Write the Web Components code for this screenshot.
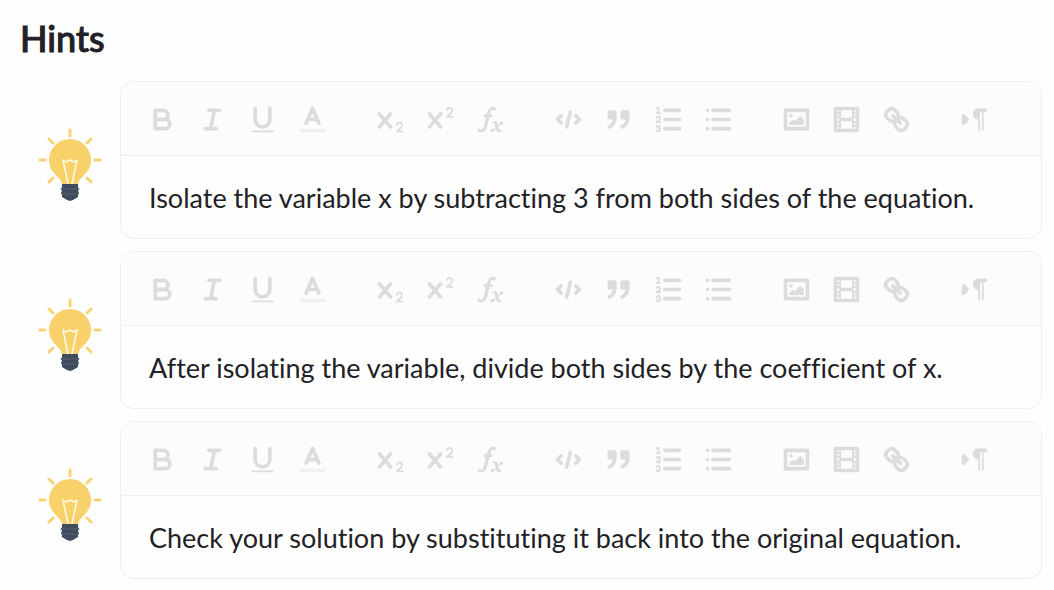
<!DOCTYPE html>
<html lang="en">
<head>
<meta charset="utf-8">
<meta name="viewport" content="width=device-width, initial-scale=1">
<title>Hints</title>
<style>
  body { margin: 0; background: #fefefe; color: #222125; font-family: Lato, "Open Sans", sans-serif; font-variant-ligatures: none; }
</style>
</head>
<body>
<hints-panel heading="Hints">
  <hint-item>Isolate the variable x by subtracting 3 from both sides of the equation.</hint-item>
  <hint-item>After isolating the variable, divide both sides by the coefficient of x.</hint-item>
  <hint-item>Check your solution by substituting it back into the original equation.</hint-item>
</hints-panel>

<template id="panel-template">
  <style>
    :host { display: block; padding: 14px 12px 12px 20px; }
    h1 { margin: 0 0 19px; font-size: 36px; line-height: 48px; font-weight: 500; -webkit-text-stroke: 1px currentColor; }
    .list { display: flex; flex-direction: column; gap: 12px; }
  </style>
  <section aria-labelledby="title">
    <h1 id="title"></h1>
    <div class="list"><slot></slot></div>
  </section>
</template>

<template id="item-template">
  <style>
    :host { display: grid; grid-template-columns: 100px minmax(0, 1fr); align-items: center; }
    hint-bulb { justify-self: center; }
  </style>
  <hint-bulb></hint-bulb>
  <rich-editor><slot></slot></rich-editor>
</template>

<template id="bulb-template">
  <style>
    :host { display: block; }
    svg { display: block; width: 64px; height: 84px; }
  </style>
  <svg viewBox="0 0 64 84" fill="none" stroke-linecap="round" aria-hidden="true">
    <path d="M32 12v6M11 21l4 4M53 21l-4 4M2 42h5M57 42h5M11 64l4-4M53 64l-4-4" stroke="#f7d373" stroke-width="3"/>
    <path d="M32 21a21 21 0 0 0-21 21c0 11 8 15 12 21 1 2 1 3 1 5h16c0-2 0-3 1-5 4-6 12-10 12-21a21 21 0 0 0-21-21z" fill="#f8d16b"/>
    <path d="M30 66L25 42l3 2 4-2 4 2 3-2-5 24" stroke="#fffbe9" stroke-width="1.5" stroke-linejoin="round"/>
    <path d="M24 66h16v3l1 2-1 2 1 2-1 2v2l-5 3-3 1-3-1-5-3v-2l-1-2 1-2-1-2 1-2z" fill="#3f4c5d"/>
    <path d="M23 71h18M24 76h16" stroke="#566273" stroke-width="1"/>
  </svg>
</template>

<template id="editor-template">
  <style>
    :host { display: block; border: 1px solid #efeef1; border-radius: 14px; overflow: hidden; background: #fefefe; }
    [role=toolbar] { display: flex; flex-wrap: wrap; column-gap: 28px; min-height: 71px; align-content: center; padding: 2px 16px 0; background: #fdfbfe; border-bottom: 1px solid #efeef1; box-sizing: content-box; }
    .group { display: flex; }
    .text { padding: 24px 28px 22px; font-size: 27px; line-height: 36px; outline: none; }
  </style>
  <div role="toolbar" aria-label="Formatting">
    <div class="group"><tool-button name="bold" label="Bold"></tool-button><tool-button name="italic" label="Italic"></tool-button><tool-button name="underline" label="Underline"></tool-button><tool-button name="color" label="Text color"></tool-button></div>
    <div class="group"><tool-button name="sub" label="Subscript"></tool-button><tool-button name="super" label="Superscript"></tool-button><tool-button name="formula" label="Formula"></tool-button></div>
    <div class="group"><tool-button name="code" label="Code"></tool-button><tool-button name="quote" label="Quote"></tool-button><tool-button name="ordered" label="Numbered list"></tool-button><tool-button name="bullet" label="Bulleted list"></tool-button></div>
    <div class="group"><tool-button name="image" label="Image"></tool-button><tool-button name="video" label="Video"></tool-button><tool-button name="link" label="Link"></tool-button></div>
    <div class="group"><tool-button name="direction" label="Text direction"></tool-button></div>
  </div>
  <div class="text" role="textbox" contenteditable="true" spellcheck="false" aria-label="Hint text"><slot></slot></div>
</template>

<template id="button-template">
  <style>
    :host { display: block; }
    button { display: grid; place-items: center; width: 50px; height: 41px; margin: 0; padding: 0; border: 0; background: none; color: #dcdbde; cursor: pointer; }
    svg { width: 33px; height: 33px; display: block; }
    .s { fill: none; stroke: currentColor; stroke-width: 2; stroke-linecap: round; stroke-linejoin: round; }
    .f { fill: currentColor; }
    .sf { fill: currentColor; stroke: currentColor; stroke-width: 2; stroke-linecap: round; stroke-linejoin: round; }
    .thin { stroke-width: 1; }
    .pale { opacity: .4; }
  </style>
  <button type="button"></button>
</template>

<script>
const X = '<path class="f" d="M9.65,5.241a1,1,0,0,0-1.409.108L6,7.964,3.759,5.349A1,1,0,0,0,2.192,6.592Q2.215,6.621,2.241,6.649L4.684,9.5,2.241,12.35A1,1,0,0,0,3.71,13.707q.026-.028.049-.057L6,11.036,8.241,13.65a1,1,0,1,0,1.567-1.243Q9.785,12.378,9.759,12.35L7.316,9.5,9.759,6.651A1,1,0,0,0,9.65,5.241Z"/>';
const ICONS = {
  bold: '<path class="s" d="M5,4H9.5A2.5,2.5,0,0,1,9.5,9H5Z"/><path class="s" d="M5,9h5.5A2.5,2.5,0,0,1,10.5,14H5Z"/>',
  italic: '<path class="s" d="M7,4H13M5,14H11M8,14L10,4"/>',
  underline: '<path class="s" d="M5,3V9a4.012,4.012,0,0,0,4,4H9a4.012,4.012,0,0,0,4-4V3"/><rect class="f" height="1" rx=".5" width="12" x="3" y="15"/>',
  color: '<path class="s pale" d="M3,15H15"/><path class="s" d="M5.5,11L9,3L12.5,11M11.63,9H6.38"/>',
  sub: '<path class="f" d="M15.5,15H13.861a3.858,3.858,0,0,0,1.914-2.975,1.8,1.8,0,0,0-1.6-1.751A1.921,1.921,0,0,0,12.021,11.7a.5.5,0,1,0,.957.291h0a.914.914,0,0,1,1.053-.725.81.81,0,0,1,.744.762c0,1.076-1.17,1.87-1.94,2.431A1.456,1.456,0,0,0,12,15.5a.5.5,0,0,0,.5.5h3A.5.5,0,0,0,15.5,15Z"/>' + X,
  super: '<path class="f" d="M15.5,7H13.861a4.015,4.015,0,0,0,1.914-2.975,1.8,1.8,0,0,0-1.6-1.751A1.922,1.922,0,0,0,12.021,3.7a.5.5,0,1,0,.957.291.917.917,0,0,1,1.053-.725.81.81,0,0,1,.744.762c0,1.077-1.164,1.925-1.934,2.486A1.423,1.423,0,0,0,12,7.5a.5.5,0,0,0,.5.5h3A.5.5,0,0,0,15.5,7Z"/>' + X,
  formula: '<path class="f" d="M11.759,2.482a2.561,2.561,0,0,0-3.53.607A7.656,7.656,0,0,0,6.8,6.2C6.109,9.188,5.275,14.677,4.15,14.927a1.545,1.545,0,0,0-1.3-.933A.922.922,0,0,0,2,15.036S1.954,16,4.119,16s3.091-2.691,3.7-5.553c.177-.826.36-1.726.554-2.6L8.775,6.2c.381-1.421.807-2.521,1.306-2.676a1.014,1.014,0,0,0,1.02.56A.966.966,0,0,0,11.759,2.482Z"/><rect class="f" height="1.6" rx=".8" width="5" x="5.15" y="6.2"/><path class="f" d="M13.663,12.027a1.662,1.662,0,0,1,.266-.276q.193.069.456.138a2.1,2.1,0,0,0,.535.069,1.075,1.075,0,0,0,.767-.3,1.044,1.044,0,0,0,.314-.8.84.84,0,0,0-.238-.619.8.8,0,0,0-.594-.239,1.154,1.154,0,0,0-.781.3,4.607,4.607,0,0,0-.781,1q-.091.15-.218.346l-.246.38c-.068-.288-.137-.582-.212-.885-.459-1.847-2.494-.984-2.941-.8-.482.2-.353.647-.094.529a.869.869,0,0,1,1.281.585c.217.751.377,1.436.527,2.038a5.688,5.688,0,0,1-.362.467,2.69,2.69,0,0,1-.264.271q-.221-.08-.471-.147a2.029,2.029,0,0,0-.522-.066,1.079,1.079,0,0,0-.768.3A1.058,1.058,0,0,0,9,15.131a.82.82,0,0,0,.832.852,1.134,1.134,0,0,0,.787-.3,5.11,5.11,0,0,0,.776-.993q.141-.219.215-.34c.046-.076.122-.194.223-.346a2.786,2.786,0,0,0,.918,1.726,2.582,2.582,0,0,0,2.376-.185c.317-.181.212-.565,0-.494A.807.807,0,0,1,14.176,15a5.159,5.159,0,0,1-.913-2.446l0,0Q13.487,12.24,13.663,12.027Z"/>',
  code: '<path class="s" d="M5,7L3,9L5,11M13,7L15,9L13,11M10,5L8,13"/>',
  quote: '<rect class="sf" height="3" width="3" x="4" y="5"/><rect class="sf" height="3" width="3" x="11" y="5"/><path class="sf" d="M7,8c0,4.031-3,5-3,5"/><path class="sf" d="M14,8c0,4.031-3,5-3,5"/>',
  ordered: '<path class="s" d="M7,4H15M7,9H15M7,14H15"/><path class="s thin" d="M2.5,5.5H4.5"/><path class="f" d="M3.5,6A0.5,0.5,0,0,1,3,5.5V3.085l-0.276.138A0.5,0.5,0,0,1,2.053,3c-0.124-.247-0.023-0.324.224-0.447l1-.5A0.5,0.5,0,0,1,4,2.5v3A0.5,0.5,0,0,1,3.5,6Z"/><path class="s thin" d="M4.5,10.5h-2c0-.234,1.85-1.076,1.85-2.234A0.959,0.959,0,0,0,2.5,8.156"/><path class="s thin" d="M2.5,14.846a0.959,0.959,0,0,0,1.85-.11A0.7,0.7,0,0,0,3.75,14a0.688,0.688,0,0,0,.6-0.736,0.959,0.959,0,0,0-1.85-.109"/>',
  bullet: '<path class="s" d="M6,4H15M6,9H15M6,14H15M3,4h0M3,9h0M3,14h0"/>',
  image: '<rect class="s" height="10" width="12" x="3" y="4"/><circle class="f" cx="6" cy="7" r="1"/><path class="f" d="M5,12V11L7,9L8,10L11,7L13,9V12Z"/>',
  video: '<rect class="s" height="12" width="12" x="3" y="3"/><path class="f" d="M5,3h1v12H5zM12,3h1v12h-1zM5,8h8v2H5zM3,5h3v1H3zM3,7h3v1H3zM3,10h3v1H3zM3,12h3v1H3zM12,5h3v1h-3zM12,7h3v1h-3zM12,10h3v1h-3zM12,12h3v1h-3z"/>',
  link: '<path class="s" d="M7,7L11,11"/><path class="s" d="M8.9,4.577a3.476,3.476,0,0,1,.36,4.679A3.476,3.476,0,0,1,4.577,8.9C3.185,7.5,2.035,6.4,4.217,4.217S7.5,3.185,8.9,4.577Z"/><path class="s" d="M13.423,9.1a3.476,3.476,0,0,0-4.679-.36,3.476,3.476,0,0,0,.36,4.679c1.392,1.392,2.5,2.542,4.679.36S14.815,10.5,13.423,9.1Z"/>',
  direction: '<path class="sf" d="M3,11L5,9L3,7Z"/><path class="s" d="M15,4H11"/><path class="f" d="M11,3a3,3,0,0,0,0,6h1V3H11Z"/><path class="f" d="M11,4h1v11h-1zM13,4h1v11h-1z"/>'
};

class TemplateElement extends HTMLElement {
  constructor() {
    super();
    const template = document.getElementById(this.constructor.template);
    this.attachShadow({ mode: 'open' }).append(template.content.cloneNode(true));
  }
}

class ToolButton extends TemplateElement {
  static template = 'button-template';
  connectedCallback() {
    const button = this.shadowRoot.querySelector('button');
    button.setAttribute('aria-label', this.getAttribute('label'));
    button.innerHTML = `<svg viewBox="0 0 18 18" aria-hidden="true">${ICONS[this.getAttribute('name')]}</svg>`;
  }
}
class HintBulb extends TemplateElement { static template = 'bulb-template'; }
class RichEditor extends TemplateElement { static template = 'editor-template'; }
class HintItem extends TemplateElement { static template = 'item-template'; }
class HintsPanel extends TemplateElement {
  static template = 'panel-template';
  connectedCallback() {
    this.shadowRoot.querySelector('h1').textContent = this.getAttribute('heading');
  }
}

customElements.define('tool-button', ToolButton);
customElements.define('hint-bulb', HintBulb);
customElements.define('rich-editor', RichEditor);
customElements.define('hint-item', HintItem);
customElements.define('hints-panel', HintsPanel);
</script>
</body>
</html>
